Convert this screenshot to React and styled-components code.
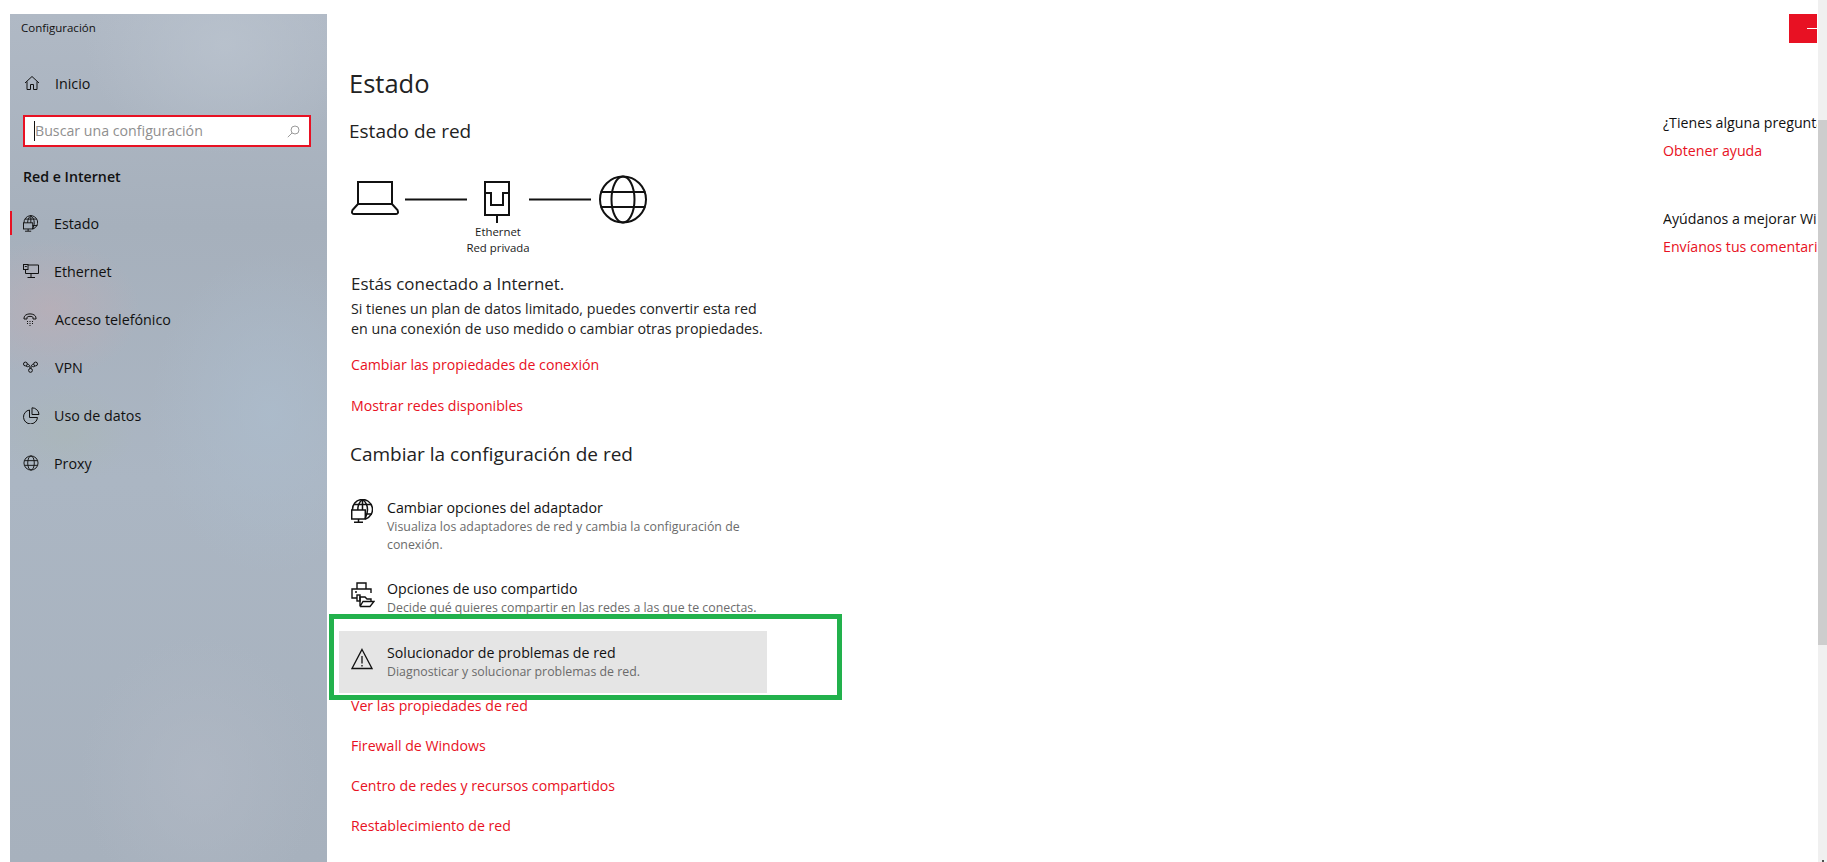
import React from 'react';
import styled, { createGlobalStyle } from 'styled-components';

const RED = '#e81123';

const GlobalStyle = createGlobalStyle`
  html, body {
    margin: 0;
    padding: 0;
    height: 100%;
    overflow: hidden;
    background: #fff;
  }
  body {
    font-family: "Open Sans", "Noto Sans", sans-serif;
    font-size: 14.2px;
    color: #1a1a1a;
  }
  svg {
    display: block;
  }
`;

const Page = styled.div`
  display: flex;
  width: 1827px;
  height: 862px;
  overflow: hidden;
`;

const Sidebar = styled.nav`
  flex: 0 0 317px;
  margin: 14px 0 0 10px;
  box-sizing: border-box;
  background:
    radial-gradient(ellipse 90px 70px at 40px 295px, rgba(196, 172, 178, 0.5), transparent),
    radial-gradient(ellipse 70px 50px at 55px 420px, rgba(170, 185, 165, 0.25), transparent),
    radial-gradient(ellipse 140px 110px at 215px 30px, rgba(186, 195, 206, 0.8), transparent),
    radial-gradient(ellipse 120px 160px at 260px 400px, rgba(172, 188, 204, 0.8), transparent),
    radial-gradient(ellipse 120px 140px at 190px 760px, rgba(176, 184, 196, 0.8), transparent),
    linear-gradient(180deg, #b0b9c5 0%, #a6b0bc 25%, #abb6c3 55%, #a7b1bd 100%);
`;

const AppTitle = styled.div`
  font-size: 11.5px;
  line-height: 16px;
  padding: 6px 0 0 11px;
  color: #111;
`;

const NavItem = styled.div`
  position: relative;
  display: flex;
  align-items: center;
  height: 48px;
  padding-left: 13px;
  font-size: 14.3px;
  color: #111;

  &::before {
    content: '';
    display: ${props => (props.$active ? 'block' : 'none')};
    position: absolute;
    left: 0;
    top: 12px;
    width: 2px;
    height: 24px;
    background: ${RED};
  }
`;

const NavIcon = styled.span`
  display: flex;
  align-items: center;
  width: ${props => props.$width || 31}px;
`;

const HomeItem = styled(NavItem)`
  margin-top: 23px;
  padding-left: 14px;
`;

const SearchBox = styled.div`
  display: flex;
  align-items: center;
  justify-content: space-between;
  box-sizing: border-box;
  width: 288px;
  height: 32px;
  margin: 8px 0 0 13px;
  padding: 0 9px 0 9px;
  background: #fff;
  border: 2px solid ${RED};
`;

const Placeholder = styled.span`
  border-left: 1px solid #111;
  line-height: 20px;
  font-size: 14.2px;
  color: #8f8f8f;
`;

const GroupTitle = styled.div`
  margin: 20px 0 12px 13px;
  font-size: 14.2px;
  line-height: 20px;
  font-weight: 600;
  color: #111;
`;

const Main = styled.main`
  flex: 0 0 1000px;
  box-sizing: border-box;
  padding: 65px 0 0 22px;
`;

const Title = styled.h1`
  margin: 0 0 16px;
  font-size: 25.5px;
  line-height: 36px;
  font-weight: 400;
  color: #222;
`;

const Heading = styled.h2`
  margin: ${props => props.$top || 0}px 0 0 ${props => props.$left || 0}px;
  font-size: 19px;
  line-height: 28px;
  font-weight: 400;
  color: #222;
`;

const Diagram = styled.div`
  margin: 30px 0 0 2px;
`;

const DiagramLabel = styled.div`
  width: 110px;
  margin-left: 92px;
  font-size: 11.4px;
  line-height: 16px;
  text-align: center;
`;

const Connected = styled.div`
  margin: 16px 0 0 2px;
  font-size: 16.9px;
  line-height: 24px;
  color: #222;
`;

const Paragraph = styled.p`
  margin: 3px 0 0 2px;
  width: 430px;
  font-size: 14.25px;
  line-height: 20px;
  color: #222;
`;

const LinkText = styled.a`
  display: block;
  margin: ${props => props.$top}px 0 0 2px;
  font-size: 14.15px;
  line-height: 20px;
  color: ${RED};
  text-decoration: none;
`;

const OptionList = styled.div`
  display: flex;
  flex-direction: column;
  gap: 1px;
  margin: 18px 0 0 -10px;
`;

const Option = styled.div`
  position: relative;
  display: flex;
  box-sizing: border-box;
  width: 428px;
  margin-top: ${props => (props.$hover ? 1 : 0)}px;
  padding: 12px 0 12px 12px;
  background: ${props => (props.$hover ? '#e5e5e5' : 'transparent')};
`;

const OptionIcon = styled.span`
  flex: 0 0 36px;
  display: flex;
  padding-top: ${props => props.$top || 0}px;
`;

const OptionTitle = styled.div`
  font-size: 14.2px;
  line-height: 20px;
  color: #111;
`;

const OptionSub = styled.div`
  font-size: 12.35px;
  line-height: 18px;
  color: #6b6b6b;
`;

const Highlight = styled.div`
  position: absolute;
  left: -10px;
  top: -17px;
  width: 513px;
  height: 86px;
  box-sizing: border-box;
  border: 5px solid #22b14c;
  pointer-events: none;
`;

const Aside = styled.aside`
  flex: 1;
  min-width: 0;
  margin: 0 1px 0 336px;
  overflow: hidden;
  white-space: nowrap;
`;

const MinimizeButton = styled.div`
  display: flex;
  align-items: center;
  justify-content: flex-end;
  width: 28px;
  height: 29px;
  margin: 14px 0 0 126px;
  background: ${RED};

  &::after {
    content: '';
    width: 10px;
    height: 1px;
    background: #fff;
  }
`;

const AsideText = styled.div`
  margin-top: ${props => props.$top}px;
  font-size: 14.2px;
  line-height: 20px;
  color: #111;
`;

const AsideLink = styled.a`
  display: block;
  margin-top: 8px;
  font-size: 14.2px;
  line-height: 20px;
  color: ${RED};
  text-decoration: none;
`;

const Scrollbar = styled.div`
  flex: 0 0 9px;
  display: flex;
  flex-direction: column;
  background: #f0f0f0;
`;

const ScrollThumb = styled.div`
  height: 525px;
  margin-top: 120px;
  background: #cdcdcd;
`;

const ScrollArrow = styled.div`
  width: 2px;
  height: 2px;
  margin: auto 0 0 4px;
  background: #505050;
`;

const IconSvg = ({ w = 16, h = 16, box, stroke = '#111', sw = 1, children }) => (
  <svg width={w} height={h} viewBox={box || `0 0 ${w} ${h}`} fill="none" stroke={stroke} strokeWidth={sw}>
    {children}
  </svg>
);

const HomeIcon = () => (
  <IconSvg>
    <path d="M1 8 L8 1.5 L15 8 M3 6.5 V14.5 H6.5 V9.5 H9.5 V14.5 H13 V6.5" />
  </IconSvg>
);

const StatusIcon = ({ w = 15, h = 17, sw = 1.4 }) => (
  <IconSvg w={w} h={h} box="0 0 22 24" sw={sw}>
    <path d="M1.5 11 A10 10 0 1 1 14.5 20" />
    <path d="M11.5 .5 C8 3 6.8 7 6.8 11 M11.5 .5 C15 3 16.5 7 16.5 11 C16.5 14 15.5 17 14 20 M11.5 .5 V11 M3 5.5 H20 M14 15 H21" />
    <rect x="0.7" y="11" width="13.6" height="9" />
    <path d="M7.5 20 V23 M3 23.3 H12" />
  </IconSvg>
);

const EthernetIcon = () => (
  <IconSvg w={16} h={14}>
    <rect x="0.5" y="0.5" width="4.5" height="5" />
    <path d="M5 1 H15.5 V9.5 H2.5 V5.5 M1.8 2.5 H3.8 M8 9.5 V13 M4.5 13.5 H12" />
  </IconSvg>
);

const PhoneIcon = () => (
  <IconSvg w={14} h={14}>
    <path d="M1 6 C1 0.5 13 0.5 13 6 V7 H10 V5.5 C10 4 4 4 4 5.5 V7 H1 Z" />
    <path d="M4 9.5 h1 M6.5 9.5 h1 M9 9.5 h1 M4 11.5 h1 M6.5 11.5 h1 M9 11.5 h1 M6.5 13.5 h1" />
  </IconSvg>
);

const VpnIcon = () => (
  <IconSvg w={15} h={12}>
    <circle cx="2.4" cy="3" r="1.9" />
    <circle cx="12.6" cy="3" r="1.9" />
    <circle cx="7.5" cy="9.4" r="1.9" />
    <path d="M4.3 3 C6 3 7 4.5 7 7.5 M10.7 3 C9 3 8 4.5 8 7.5 M6 5 C5.5 6 4 6 3 5 M9 5 C9.5 6 11 6 12 5" />
  </IconSvg>
);

const DataIcon = () => (
  <IconSvg w={17} h={17}>
    <path d="M6.5 3 A7 7 0 1 0 14.5 10.5 H6.5 Z" />
    <path d="M9 0.8 A7 7 0 0 1 16 7.5 H9 Z" />
  </IconSvg>
);

const GlobeIcon = () => (
  <IconSvg w={16} h={16} box="0 0 17 17">
    <circle cx="8.5" cy="8.5" r="7.5" />
    <ellipse cx="8.5" cy="8.5" rx="3.5" ry="7.5" />
    <path d="M1.5 6 H15.5 M1.5 11 H15.5" />
  </IconSvg>
);

const SearchIcon = () => (
  <IconSvg w={13} h={13} stroke="#9a9a9a">
    <circle cx="8" cy="5" r="4" />
    <path d="M5 8 L0.8 12.2" />
  </IconSvg>
);

const NetworkDiagram = () => (
  <IconSvg w={300} h={49} sw={2}>
    <path d="M7 29 V7 H41 V29 M7 29 L1.5 35 Q0 39 3 39 H45 Q48 39 46.5 35 L41 29 H7" />
    <path d="M54 24.5 H116" />
    <rect x="134" y="7" width="24" height="33" />
    <path d="M134 18 H140 V30 H152 V18 H158 M146 40 V48" />
    <path d="M178 24.5 H240" />
    <circle cx="272" cy="24.5" r="23" />
    <ellipse cx="272" cy="24.5" rx="11.5" ry="23" />
    <path d="M249.5 17 H294.5 M249.5 32 H294.5" />
  </IconSvg>
);

const ShareIcon = () => (
  <IconSvg w={24} h={26} sw={1.4}>
    <path d="M6 7 V1 H15 V7 M6 16 H1 V7 H20 V11 M4 10 H6" />
    <rect x="6" y="13" width="3" height="6" />
    <path d="M9 24.5 V15 H14 L16 17 H20 V20 M9 24.5 H19 L23 19.5 H12 L9 24.5" />
  </IconSvg>
);

const WarningIcon = () => (
  <IconSvg w={22} h={22} sw={1.3}>
    <path d="M11 1.5 L21 20.5 H1 Z" />
    <path d="M11 8 V15.5 M11 17 V18.5" />
  </IconSvg>
);

const sections = [
  { label: 'Estado', icon: <StatusIcon />, active: true },
  { label: 'Ethernet', icon: <EthernetIcon /> },
  { label: 'Acceso telefónico', icon: <PhoneIcon />, width: 32 },
  { label: 'VPN', icon: <VpnIcon />, width: 32 },
  { label: 'Uso de datos', icon: <DataIcon /> },
  { label: 'Proxy', icon: <GlobeIcon /> },
];

const bottomLinks = [
  'Ver las propiedades de red',
  'Firewall de Windows',
  'Centro de redes y recursos compartidos',
  'Restablecimiento de red',
];

const App = () => (
  <Page>
    <GlobalStyle />
    <Sidebar>
      <AppTitle>Configuración</AppTitle>
      <HomeItem>
        <NavIcon><HomeIcon /></NavIcon>
        Inicio
      </HomeItem>
      <SearchBox>
        <Placeholder>Buscar una configuración</Placeholder>
        <SearchIcon />
      </SearchBox>
      <GroupTitle>Red e Internet</GroupTitle>
      {sections.map(item => (
        <NavItem key={item.label} $active={item.active}>
          <NavIcon $width={item.width}>{item.icon}</NavIcon>
          {item.label}
        </NavItem>
      ))}
    </Sidebar>

    <Main>
      <Title>Estado</Title>
      <Heading>Estado de red</Heading>
      <Diagram>
        <NetworkDiagram />
        <DiagramLabel>Ethernet<br />Red privada</DiagramLabel>
      </Diagram>
      <Connected>Estás conectado a Internet.</Connected>
      <Paragraph>
        Si tienes un plan de datos limitado, puedes convertir esta red<br />
        en una conexión de uso medido o cambiar otras propiedades.
      </Paragraph>
      <LinkText $top={16}>Cambiar las propiedades de conexión</LinkText>
      <LinkText $top={21}>Mostrar redes disponibles</LinkText>
      <Heading $top={24} $left={1}>Cambiar la configuración de red</Heading>
      <OptionList>
        <Option>
          <OptionIcon $top={1}><StatusIcon w={22} h={24} sw={1.5} /></OptionIcon>
          <div>
            <OptionTitle>Cambiar opciones del adaptador</OptionTitle>
            <OptionSub>Visualiza los adaptadores de red y cambia la configuración de<br />conexión.</OptionSub>
          </div>
        </Option>
        <Option>
          <OptionIcon $top={3}><ShareIcon /></OptionIcon>
          <div>
            <OptionTitle>Opciones de uso compartido</OptionTitle>
            <OptionSub>Decide qué quieres compartir en las redes a las que te conectas.</OptionSub>
          </div>
        </Option>
        <Option $hover>
          <OptionIcon $top={5}><WarningIcon /></OptionIcon>
          <div>
            <OptionTitle>Solucionador de problemas de red</OptionTitle>
            <OptionSub>Diagnosticar y solucionar problemas de red.</OptionSub>
          </div>
          <Highlight />
        </Option>
      </OptionList>
      {bottomLinks.map((label, i) => (
        <LinkText key={label} $top={i === 0 ? 3 : 20}>{label}</LinkText>
      ))}
    </Main>

    <Aside>
      <MinimizeButton />
      <AsideText $top={70}>¿Tienes alguna pregunta?</AsideText>
      <AsideLink>Obtener ayuda</AsideLink>
      <AsideText $top={48}>Ayúdanos a mejorar Windows</AsideText>
      <AsideLink>Envíanos tus comentarios</AsideLink>
    </Aside>

    <Scrollbar>
      <ScrollThumb />
      <ScrollArrow />
    </Scrollbar>
  </Page>
);

export default App;
